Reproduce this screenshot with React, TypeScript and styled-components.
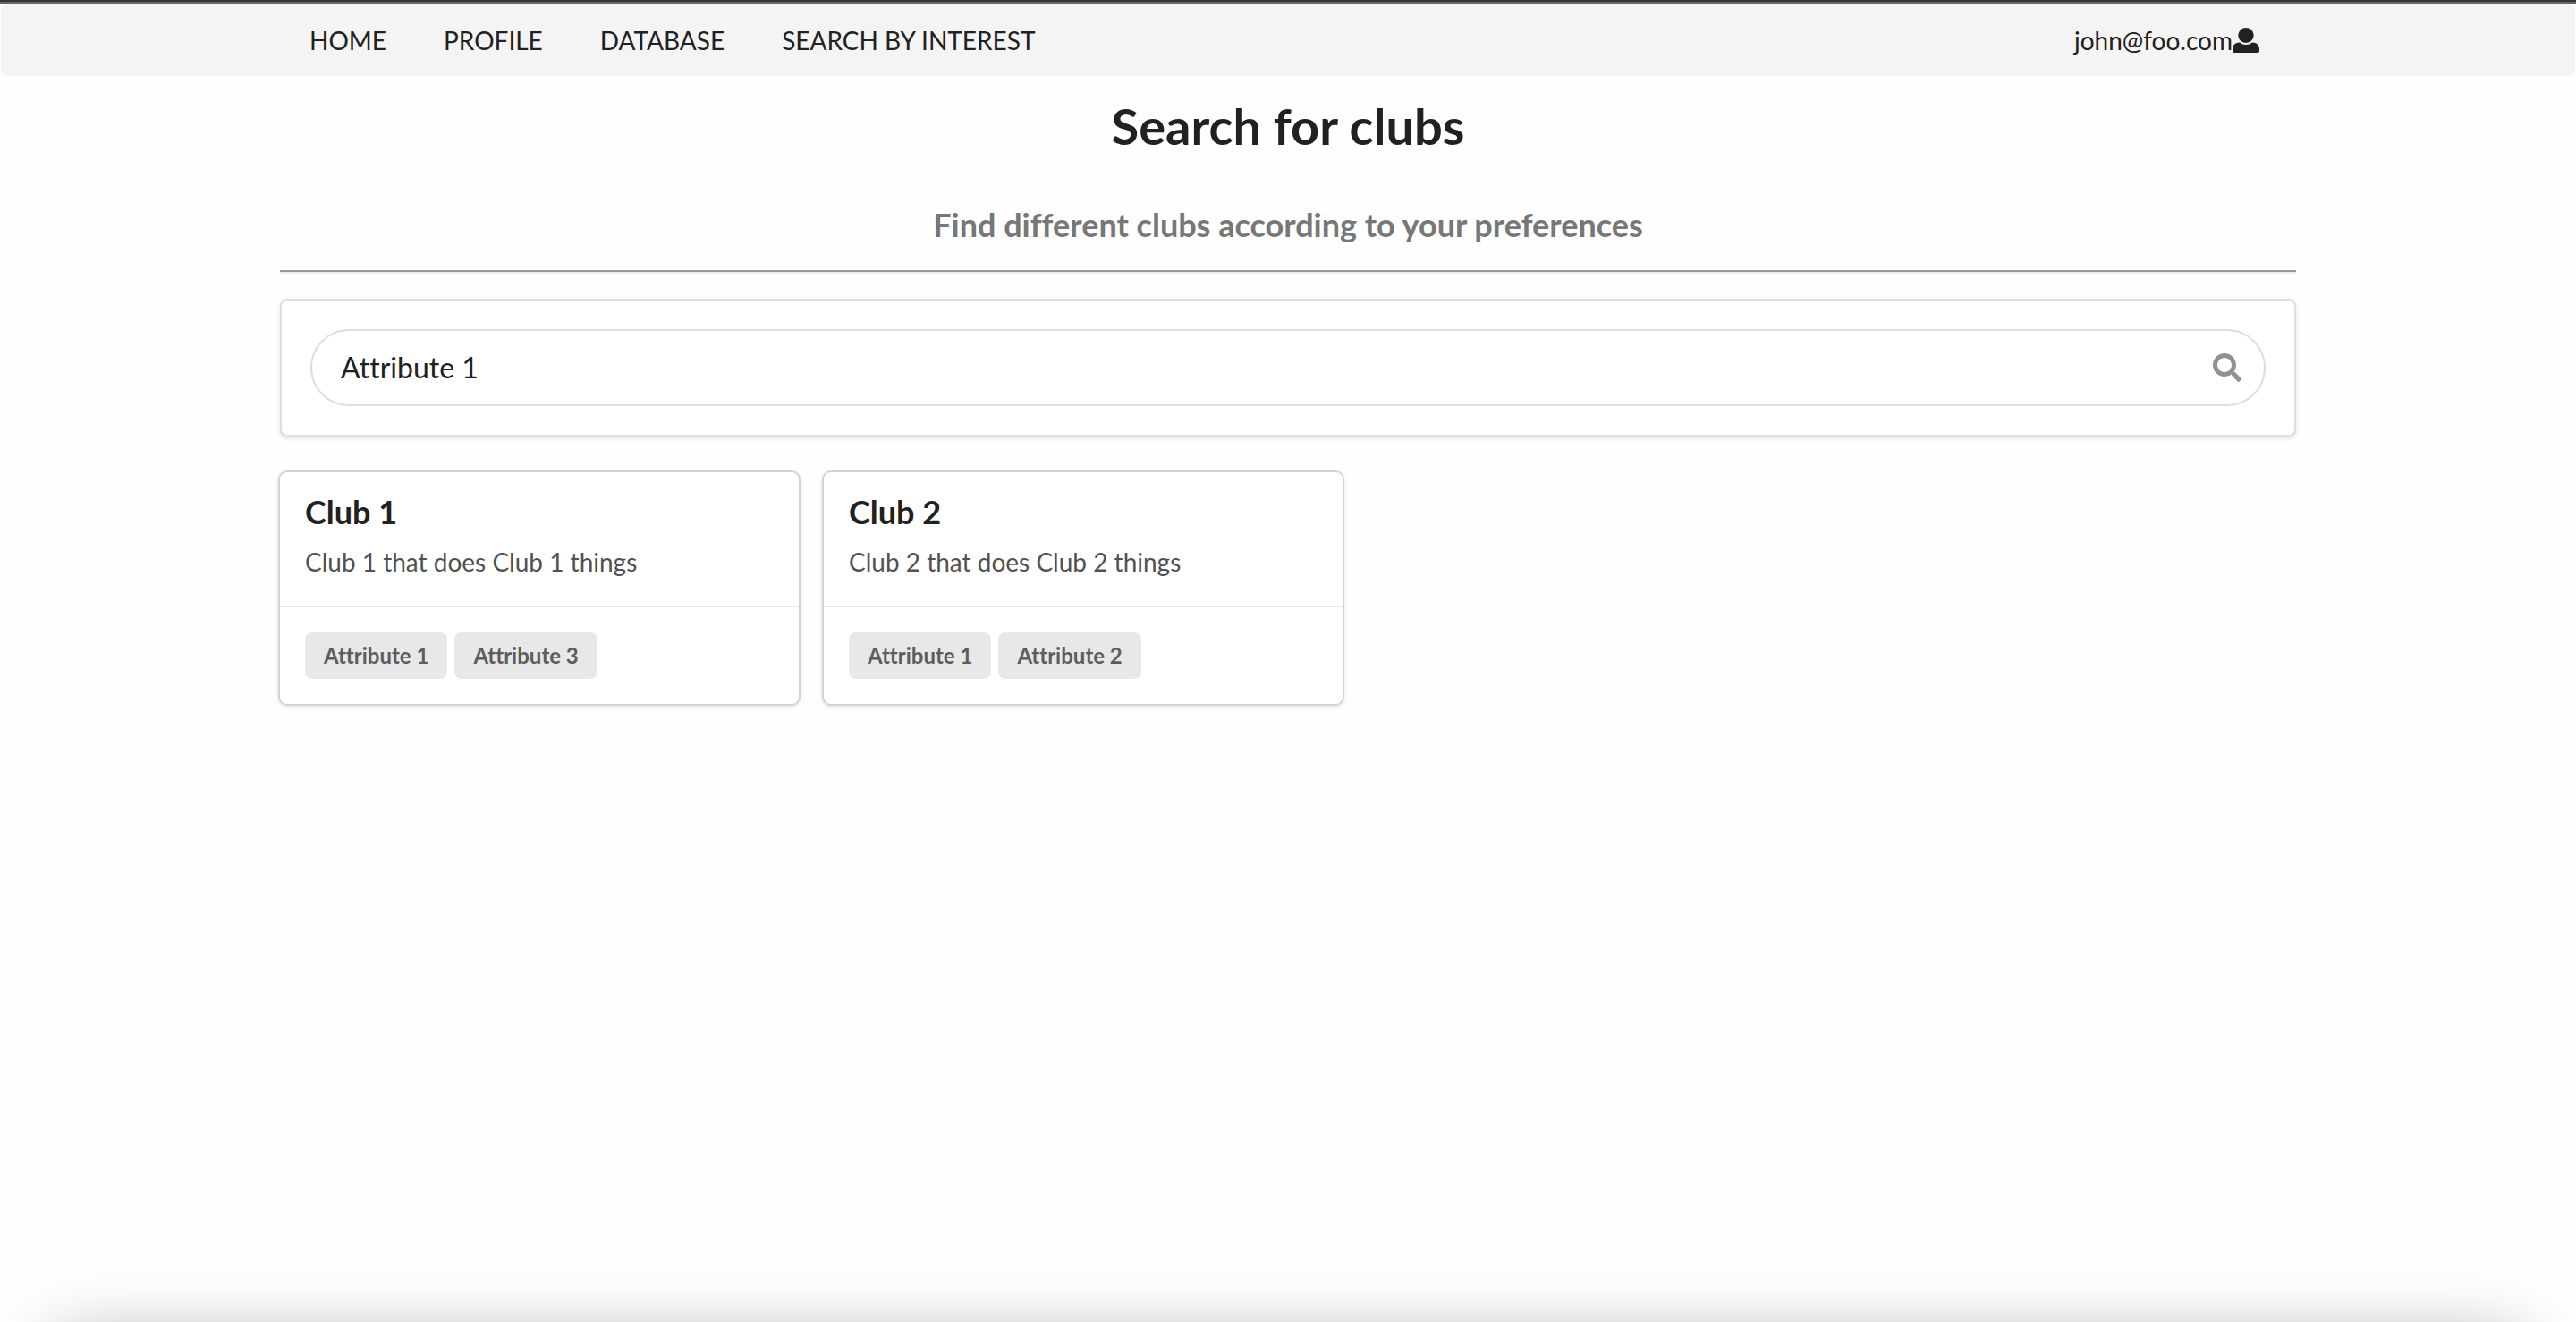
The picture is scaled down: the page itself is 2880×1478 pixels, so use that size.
import React, { useState } from 'react';
import styled, { createGlobalStyle } from 'styled-components';
import { FaSearch } from 'react-icons/fa';

const GlobalStyle = createGlobalStyle`
  *, *::before, *::after { box-sizing: border-box; }
  body {
    margin: 0;
    background: #fefefe;
    color: #212121;
    font-family: Lato, "Liberation Sans", sans-serif;
    font-size: 28px;
    line-height: 40px;
    font-variant-ligatures: none;
  }
`;

const Page = styled.div`
  display: flex;
  flex-direction: column;
  min-height: 100vh;
  border-top: 2px solid #36363a;
`;

const Header = styled.header`
  border-top: 2px solid #666668;
`;

const Container = styled.div`
  width: calc(100% - 626px);
  min-width: 1200px;
  margin: 0 auto;
`;

const MenuBar = styled.nav`
  margin: 0 1px;
  background: #f4f4f4;
  border-radius: 8px;
`;

const MenuRow = styled(Container)`
  display: flex;
  align-items: stretch;
`;

const MenuLink = styled.a<{ $end?: boolean }>`
  display: flex;
  align-items: center;
  padding: 21px 32px 20px;
  margin-left: ${(p) => (p.$end ? 'auto' : '0')};
  margin-right: ${(p) => (p.$end ? '8px' : '0')};
  color: inherit;
  text-decoration: none;
`;

const UserGlyph = styled.svg`
  width: 30px;
  height: 28px;
  fill: currentColor;
`;

const Title = styled.h1`
  margin: 20px 0 0;
  font-size: 56px;
  line-height: 72px;
  text-align: center;
`;

const Subtitle = styled.h3`
  margin: 50px 0 0;
  font-size: 36px;
  line-height: 48px;
  text-align: center;
  color: #777;
`;

const Rule = styled.hr`
  margin: 27px 0 28px;
  border: 0;
  border-top: 2px solid #9a9a9a;
  border-bottom: 2px solid #eee;
`;

const Segment = styled.form`
  padding: 32px;
  background: #fff;
  border: 2px solid #dedede;
  border-radius: 8px;
  box-shadow: 0 2px 4px rgba(34, 36, 38, 0.15);
`;

const SearchField = styled.div`
  display: flex;
  align-items: center;
  height: 86px;
  padding: 0 25px 0 32px;
  border: 2px solid #dedede;
  border-radius: 43px;
`;

const SearchInput = styled.input`
  flex: 1;
  min-width: 0;
  padding: 0;
  border: 0;
  outline: 0;
  background: transparent;
  color: inherit;
  font: inherit;
  font-size: 32px;
  font-variant-ligatures: none;
`;

const SearchButton = styled.button`
  display: flex;
  padding: 0;
  border: 0;
  background: none;
  color: #919191;
  font-size: 32px;
`;

const Cards = styled.ul`
  display: flex;
  flex-wrap: wrap;
  gap: 28px;
  margin: 40px 0;
  padding: 0;
  list-style: none;
`;

const Card = styled.li`
  width: 580px;
  background: #fff;
  border-radius: 8px;
  box-shadow: 0 0 0 2px #d4d4d5, 0 2px 6px 0 #d4d4d5;
`;

const CardBody = styled.div`
  padding: 22px 28px 19px;
`;

const CardTitle = styled.h2`
  margin: 0;
  font-size: 36px;
  line-height: 44px;
`;

const CardText = styled.p`
  margin: 14px 0 10px;
  color: #515151;
`;

const CardExtra = styled.div`
  display: flex;
  gap: 8px;
  padding: 28px;
  border-top: 2px solid #e7e7e7;
`;

const Label = styled.span`
  padding: 14px 21px;
  border-radius: 8px;
  background: #e8e8e8;
  color: #5d5d5d;
  font-size: 24px;
  font-weight: 700;
  line-height: 24px;
`;

const BottomShade = styled.div`
  position: fixed;
  right: 64px;
  bottom: -220px;
  left: 64px;
  height: 200px;
  box-shadow: 0 0 72px rgba(0, 0, 0, 0.34);
  pointer-events: none;
`;

const links = ['HOME', 'PROFILE', 'DATABASE', 'SEARCH BY INTEREST'];

const clubs = [
  { name: 'Club 1', text: 'Club 1 that does Club 1 things', attributes: ['Attribute 1', 'Attribute 3'] },
  { name: 'Club 2', text: 'Club 2 that does Club 2 things', attributes: ['Attribute 1', 'Attribute 2'] },
];

export default function App() {
  const [query, setQuery] = useState('Attribute 1');
  return (
    <Page>
      <GlobalStyle />
      <Header>
        <MenuBar>
          <MenuRow>
            {links.map((link) => (
              <MenuLink key={link} href="#">{link}</MenuLink>
            ))}
            <MenuLink href="#" $end>
              john@foo.com
              <UserGlyph viewBox="0 0 30 28" aria-hidden="true">
                <ellipse cx="15" cy="8.5" rx="8.7" ry="8.5" />
                <path d="M8 16.500c2 1.700 4.500 2.500 7 2.500s5-.8 7-2.500c5 0 8 3 8 7V26q0 2-2 2H2q-2 0-2-2v-2.500c0-4 3-7 8-7z" />
              </UserGlyph>
            </MenuLink>
          </MenuRow>
        </MenuBar>
      </Header>
      <Container as="main">
        <Title>Search for clubs</Title>
        <Subtitle>Find different clubs according to your preferences</Subtitle>
        <Rule />
        <Segment onSubmit={(e) => e.preventDefault()}>
          <SearchField>
            <SearchInput aria-label="Search clubs" value={query} onChange={(e) => setQuery(e.target.value)} />
            <SearchButton type="submit" aria-label="Search"><FaSearch /></SearchButton>
          </SearchField>
        </Segment>
        <Cards>
          {clubs.map((club) => (
            <Card key={club.name}>
              <CardBody>
                <CardTitle>{club.name}</CardTitle>
                <CardText>{club.text}</CardText>
              </CardBody>
              <CardExtra>
                {club.attributes.map((a) => <Label key={a}>{a}</Label>)}
              </CardExtra>
            </Card>
          ))}
        </Cards>
      </Container>
      <BottomShade />
    </Page>
  );
}
